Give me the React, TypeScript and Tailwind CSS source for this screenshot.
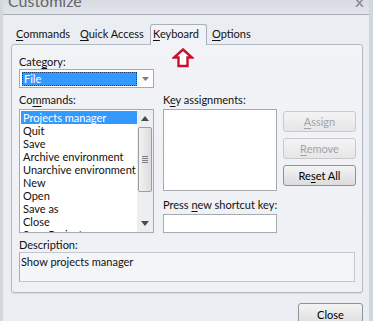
const commands = [
  "Projects manager",
  "Quit",
  "Save",
  "Archive environment",
  "Unarchive environment",
  "New",
  "Open",
  "Save as",
  "Close",
  "Save Project",
];

function U({ children }: { children: string }) {
  return <span className="underline underline-offset-2">{children}</span>;
}

function Button({
  children,
  disabled,
  className = "",
}: {
  children: React.ReactNode;
  disabled?: boolean;
  className?: string;
}) {
  return (
    <div
      className={
        "flex h-[21px] items-center justify-center rounded-[3px] border " +
        (disabled
          ? "border-[#c6c9cd] bg-gradient-to-b from-[#f4f4f4] to-[#e6e6e6] text-[#a3a3a3] "
          : "border-[#8e9196] bg-gradient-to-b from-[#f4f4f4] to-[#dcdcdc] text-black ") +
        className
      }
    >
      {children}
    </div>
  );
}

function ScrollBar() {
  return (
    <div className="flex w-[16px] flex-col bg-[#eceef0]">
      <div className="flex h-[17px] items-center justify-center">
        <svg width="8" height="5" viewBox="0 0 8 5">
          <path d="M0 5 L4 0 L8 5 Z" fill="#4a4a4a" />
        </svg>
      </div>
      <div className="mx-[1px] flex h-[65px] items-center justify-center rounded-[2px] border border-[#9a9da2] bg-gradient-to-r from-[#f3f3f3] to-[#dcdcdc]">
        <div className="flex flex-col gap-[1px]">
          <div className="h-px w-[6px] bg-[#7c7f84]" />
          <div className="h-px w-[6px] bg-[#7c7f84]" />
          <div className="h-px w-[6px] bg-[#7c7f84]" />
          <div className="h-px w-[6px] bg-[#7c7f84]" />
        </div>
      </div>
      <div className="flex-1" />
      <div className="flex h-[17px] items-center justify-center">
        <svg width="8" height="5" viewBox="0 0 8 5">
          <path d="M0 0 L4 5 L8 0 Z" fill="#4a4a4a" />
        </svg>
      </div>
    </div>
  );
}

export default function App() {
  return (
    <div className="relative h-[321px] w-[373px] overflow-hidden whitespace-nowrap border-l-[3px] border-r-[4px] border-[#d3d7dc] bg-[#eaedf1] font-['Lato',sans-serif] text-[11px] leading-[14px] text-[#111]">
      {/* title bar */}
      <div className="flex h-[15px] items-start justify-between overflow-hidden border-b border-[#a9aeb6] bg-gradient-to-b from-[#d8dce2] to-[#e2e5ea] pl-[5px] pr-[5px]">
        <span className="-mt-[8px] text-[16px] leading-[18px] text-[#62666b]">Customize</span>
        <svg width="9" height="8" viewBox="0 0 9 8" className="-mt-[1px]">
          <path d="M1 0 L8 8 M8 0 L1 8" stroke="#8a8e94" strokeWidth="1.6" />
        </svg>
      </div>

      {/* tabs */}
      <div className="ml-[10px] flex h-[29px] items-end pt-[9px]">
        <div className="flex h-[20px] w-[58px] items-center pl-[3px]">
          <span><U>C</U>ommands</span>
        </div>
        <div className="ml-[6px] flex h-[20px] w-[68px] items-center pl-[3px]">
          <span><U>Q</U>uick Access</span>
        </div>
        <div className="relative z-10 ml-[5px] -mb-px flex h-[21px] w-[57px] items-start rounded-t-[3px] border border-b-0 border-[#a9afb8] bg-[#f1f3f6] pl-[2px] pt-[2px]">
          <span><U>K</U>eyboard</span>
        </div>
        <div className="ml-[2px] flex h-[20px] w-[44px] items-center pl-[3px]">
          <span><U>O</U>ptions</span>
        </div>
      </div>

      {/* panel */}
      <div className="ml-[8px] flex h-[249px] w-[352px] flex-col rounded-[3px] border border-[#b3b9c2] bg-gradient-to-b from-[#f1f3f6] to-[#eef0f3] pl-[7px] pt-[10px] shadow-[0_1px_1px_rgba(0,0,0,0.08)]">
        <div>Cate<U>g</U>ory:</div>
        <div className="flex h-[19px] w-[135px] items-center border border-[#a5a9b0] bg-white pl-[2px]">
          <div className="flex h-[14px] w-[115px] items-center border border-dotted border-[#1a3f6e] bg-[#3399ff] pl-[1px] text-white">
            File
          </div>
          <div className="flex flex-1 items-center justify-center">
            <svg width="7" height="4" viewBox="0 0 7 4">
              <path d="M0 0 L3.5 4 L7 0 Z" fill="#7a7d82" />
            </svg>
          </div>
        </div>

        <div className="mt-[5px] flex">
          <div className="flex w-[144px] flex-col">
            <div>Co<U>m</U>mands:</div>
            <div className="mt-[2px] flex h-[124px] w-[135px] overflow-hidden border border-[#a5a9b0] bg-white">
              <div className="flex flex-1 flex-col overflow-hidden pl-px pt-px">
                {commands.map((c, i) => (
                  <div
                    key={c}
                    className={
                      "h-[13px] shrink-0 pl-[2px] leading-[13px] " +
                      (i === 0 ? "bg-[#3399ff] text-white" : "")
                    }
                  >
                    {c}
                  </div>
                ))}
              </div>
              <ScrollBar />
            </div>
          </div>

          <div className="flex">
            <div className="flex w-[114px] flex-col">
              <div>K<U>e</U>y assignments:</div>
              <div className="mt-[2px] h-[82px] border border-[#a5a9b0] bg-white" />
              <div className="mt-[7px]">Press <U>n</U>ew shortcut key:</div>
              <div className="mt-[2px] h-[19px] border border-[#a5a9b0] bg-white" />
            </div>
            <div className="ml-[6px] flex w-[73px] flex-col gap-[6px] pt-[18px]">
              <Button disabled><span><U>A</U>ssign</span></Button>
              <Button disabled><span><U>R</U>emove</span></Button>
              <Button><span>Re<U>s</U>et All</span></Button>
            </div>
          </div>
        </div>

        <div className="mt-[5px]">Description:</div>
        <div className="h-[30px] w-[336px] border border-[#c3c8cf] border-l-[#a9aeb5] bg-[#f3f5f8] pl-px pt-[2px]">
          Show projects manager
        </div>
      </div>

      {/* footer */}
      <div className="mr-[6px] mt-[10px] flex justify-end">
        <Button className="h-[24px] w-[65px]">Close</Button>
      </div>

      {/* red arrow annotation */}
      <svg
        className="absolute left-[169px] top-[48px]"
        width="22"
        height="20"
        viewBox="0 0 22 20"
      >
        <path
          d="M11 1.5 L20 9.5 L15.5 9.5 L15.5 18 L6.5 18 L6.5 9.5 L2 9.5 Z"
          fill="#ffffff"
          stroke="#c8102e"
          strokeWidth="2.4"
          strokeLinejoin="miter"
        />
      </svg>
    </div>
  );
}
